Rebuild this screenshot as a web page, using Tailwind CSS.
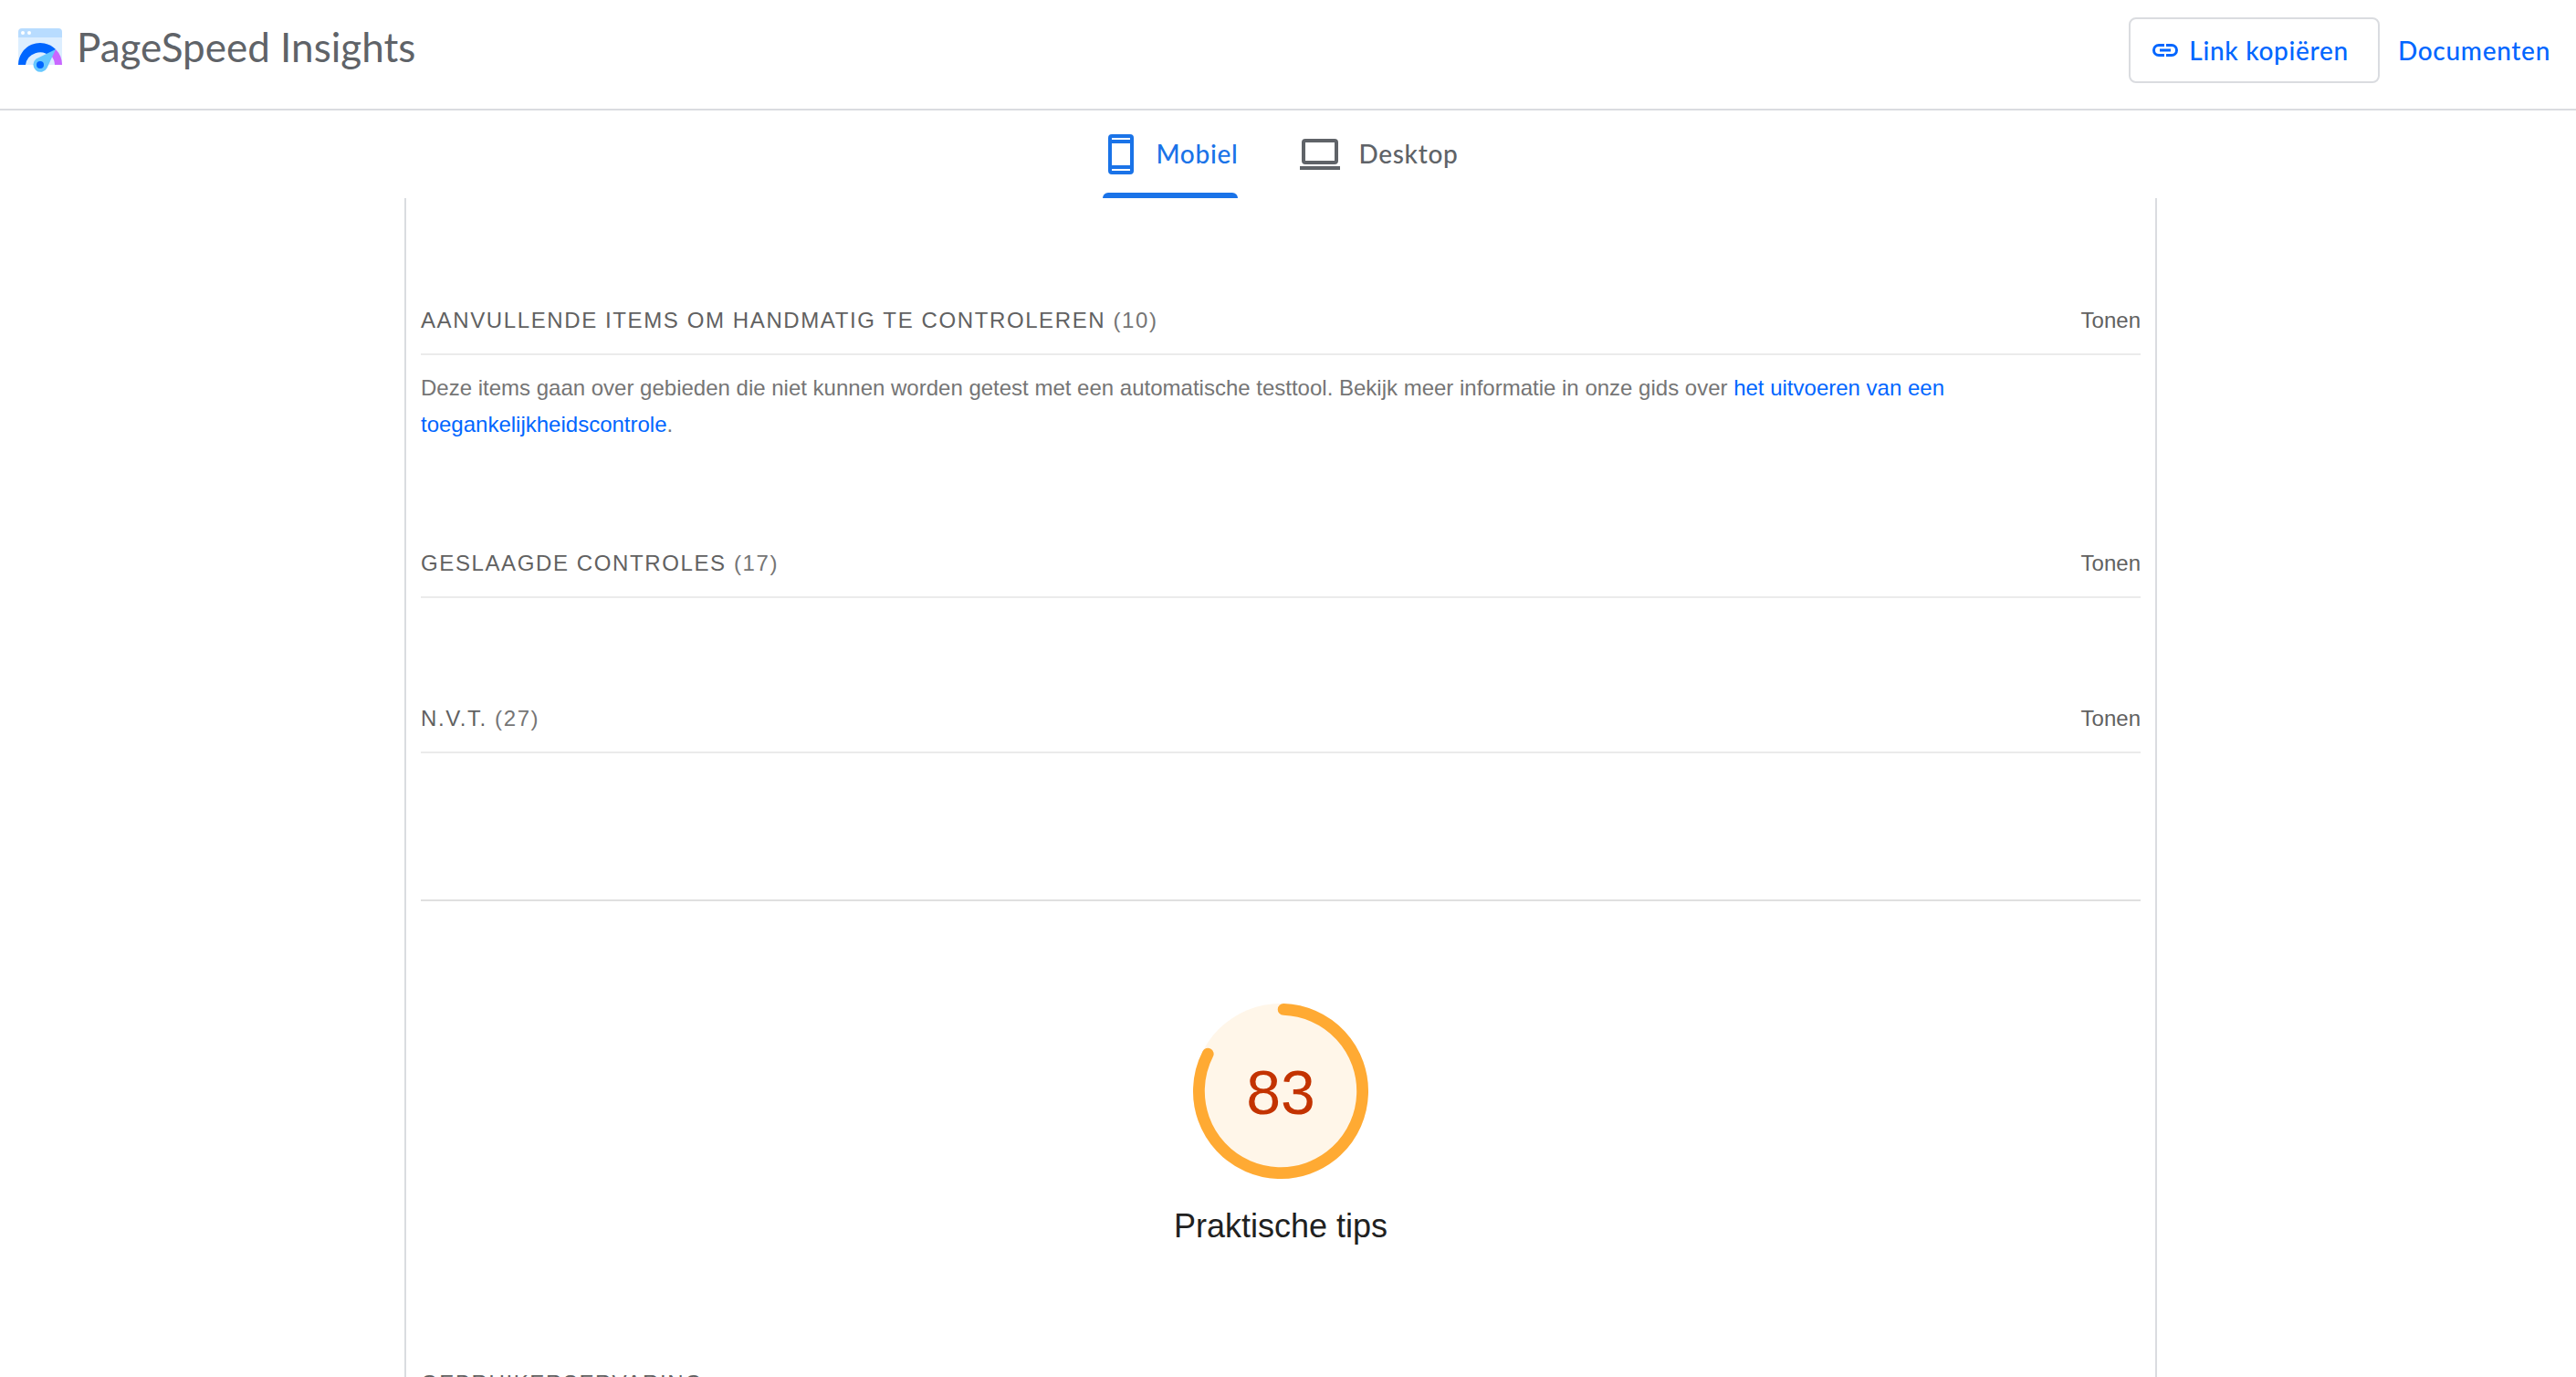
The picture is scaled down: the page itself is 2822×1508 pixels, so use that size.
<!DOCTYPE html>
<html lang="nl">
<head>
<meta charset="utf-8">
<meta name="viewport" content="width=device-width, initial-scale=1">
<title>PageSpeed Insights</title>
<script src="https://cdn.jsdelivr.net/npm/@tailwindcss/browser@4"></script>
</head>
<body class="flex h-screen flex-col bg-white font-['Liberation_Sans',Arial,sans-serif] text-2xl leading-10 text-[#757575]">
  <header class="flex shrink-0 items-center justify-between border-b-2 border-[#dadce0] px-5 pt-[19px] pb-7 font-['Lato',sans-serif]">
    <a href="#" class="flex items-center gap-4 text-[#5f6368]">
      <svg class="size-12" viewBox="0 0 48 48" aria-hidden="true">
        <path d="M0 10h48v30H0z" fill="#dceeff"/>
        <path d="M0 10V4a4 4 0 0 1 4-4h40a4 4 0 0 1 4 4v6z" fill="#b8dcff"/>
        <circle cx="5" cy="5" r="2" fill="#fff"/>
        <circle cx="12" cy="5" r="2" fill="#fff"/>
        <path d="M0 40a24 24 0 0 1 41-17l-6 8A16 16 0 0 0 8 40z" fill="#06f"/>
        <path d="M41 23a24 24 0 0 1 7 17h-8a16 16 0 0 0-4-10z" fill="#c967ff"/>
        <path d="M41 23 31.500 43.500A8 8 0 1 1 19.500 33.500z" fill="#67c8ff"/>
        <circle cx="24" cy="40" r="4" fill="#06f"/>
      </svg>
      <span class="pb-2 text-[44px] leading-12">PageSpeed Insights</span>
    </a>
    <div class="flex items-center gap-5 pr-2 text-[28px] font-medium tracking-wide text-[#06f]">
      <button type="button" class="flex h-[72px] items-center gap-3 rounded-lg border-2 border-[#dadce0] pr-8 pl-6 tracking-wide">
        <svg class="h-[14px] w-7" viewBox="0 0 28 14" fill="none" stroke="currentColor" stroke-width="3" aria-hidden="true">
          <path d="M13 1.500H7a5.500 5.500 0 0 0 0 11h6M15 1.500h6a5.500 5.500 0 0 1 0 11h-6M8 7h12"/>
        </svg>
        Link kopiëren
      </button>
      <a href="#">Documenten</a>
    </div>
  </header>

  <nav class="flex h-24 shrink-0 justify-center gap-[68px] pr-4 font-['Lato',sans-serif] text-[28px] font-medium tracking-wide">
    <a href="#" class="relative flex items-center gap-6 pl-[6px] text-[#1a73e8]" aria-current="page">
      <svg class="h-11 w-7" viewBox="0 0 28 44" aria-hidden="true">
        <path fill="currentColor" fill-rule="evenodd" d="M4 0h20a4 4 0 0 1 4 4v36a4 4 0 0 1-4 4H4a4 4 0 0 1-4-4V4a4 4 0 0 1 4-4zM4 4v2h20V4zM4 10v24h20V10zM4 38v2h20v-2z"/>
      </svg>
      <span class="pb-[2px]">Mobiel</span>
      <span class="absolute inset-x-0 bottom-0 h-[6px] rounded-t-md bg-[#1a73e8]"></span>
    </a>
    <a href="#" class="flex items-center gap-5 text-[#5f6368]">
      <svg class="h-[34px] w-11" viewBox="0 0 44 34" aria-hidden="true">
        <path fill="currentColor" fill-rule="evenodd" d="M6 0h32a4 4 0 0 1 4 4v20a4 4 0 0 1-4 4H6a4 4 0 0 1-4-4V4a4 4 0 0 1 4-4zM6 4v20h32V4zM0 30h44v4H0z"/>
      </svg>
      <span class="pb-[2px]">Desktop</span>
    </a>
  </nav>

  <main class="min-h-0 flex-1 overflow-y-auto pr-4 [scrollbar-width:none]">
    <div class="mx-auto max-w-[1920px] border-x-2 border-[#dadce0] px-4">
      <section class="pt-[114px]">
        <div class="flex justify-between border-b-2 border-[#ebebeb] pb-4 text-[#616161]">
          <h2 class="tracking-[0.067em] uppercase">Aanvullende items om handmatig te controleren <span class="text-[#757575]">(10)</span></h2>
          <button type="button">Tonen</button>
        </div>
        <p class="max-w-[1740px] pt-4">Deze items gaan over gebieden die niet kunnen worden getest met een automatische testtool. Bekijk meer informatie in onze gids over <a href="#" class="text-[#06f]">het uitvoeren van een toegankelijkheidscontrole</a>.</p>
      </section>
      <section class="pt-28">
        <div class="flex justify-between border-b-2 border-[#ebebeb] pb-4 text-[#616161]">
          <h2 class="tracking-[0.067em] uppercase">Geslaagde controles <span class="text-[#757575]">(17)</span></h2>
          <button type="button">Tonen</button>
        </div>
      </section>
      <section class="pt-28">
        <div class="flex justify-between border-b-2 border-[#ebebeb] pb-4 text-[#616161]">
          <h2 class="tracking-[0.067em] uppercase">N.v.t. <span class="text-[#757575]">(27)</span></h2>
          <button type="button">Tonen</button>
        </div>
      </section>
      <section class="mt-40 border-t-2 border-[#e0e0e0] pt-28">
        <div class="flex flex-col items-center gap-7">
          <div class="grid size-48 place-items-center">
            <svg class="col-start-1 row-start-1 size-48" viewBox="0 0 120 120" aria-hidden="true">
              <circle cx="60" cy="60" r="60" fill="#fff6e9"/>
              <circle cx="60" cy="60" r="56" fill="none" stroke="#fa3" stroke-width="8" stroke-linecap="round" stroke-dasharray="288 352" transform="rotate(-88 60 60)"/>
            </svg>
            <span class="col-start-1 row-start-1 pt-[2px] text-[68px] text-[#c33300]">83</span>
          </div>
          <h2 class="text-4xl leading-12 text-[#212121]">Praktische tips</h2>
        </div>
        <h3 class="pt-32 tracking-[0.067em] text-[#616161] uppercase">Gebruikerservaring</h3>
      </section>
    </div>
  </main>
</body>
</html>
